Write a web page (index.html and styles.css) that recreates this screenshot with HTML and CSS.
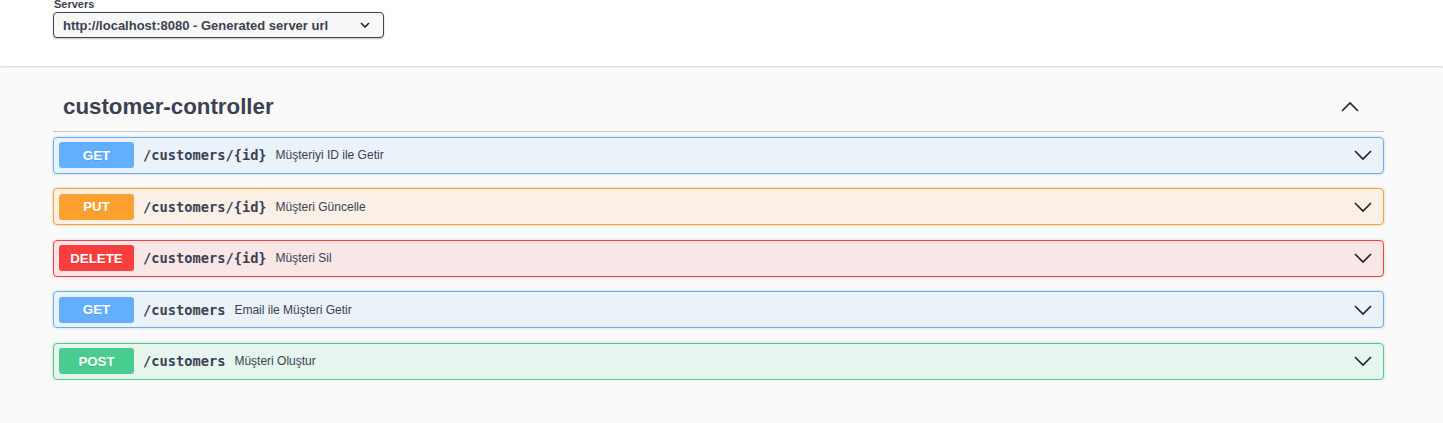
FILE: index.html
```html
<!DOCTYPE html>
<html lang="tr">
<head>
<meta charset="utf-8">
<title>Swagger UI</title>
<link rel="stylesheet" href="styles.css">
</head>
<body>
<div class="scheme">
  <div class="servers">
    <span class="servers-label">Servers</span>
    <div class="server-select">
      <span>http://localhost:8080 - Generated server url</span>
      <svg class="sel-arrow" width="10" height="6" viewBox="0 0 10 6"><path d="M1 1 L5 5 L9 1" fill="none" stroke="#222" stroke-width="1.6"/></svg>
    </div>
  </div>
</div>
<div class="wrapper">
  <div class="tag-header">
    <h3 class="tag-title">customer-controller</h3>
    <svg class="chev" width="20" height="20" viewBox="0 0 20 20"><path d="M2 14 L10 6 L18 14" fill="none" stroke="#222" stroke-width="1.6"/></svg>
  </div>
  <div class="ops">
    <div class="op op-get">
      <span class="method">GET</span>
      <span class="path">/customers/{id}</span>
      <span class="desc">Müşteriyi ID ile Getir</span>
      <svg class="chev" width="20" height="20" viewBox="0 0 20 20"><path d="M2 6 L10 14 L18 6" fill="none" stroke="#222" stroke-width="1.6"/></svg>
    </div>
    <div class="op op-put">
      <span class="method">PUT</span>
      <span class="path">/customers/{id}</span>
      <span class="desc">Müşteri Güncelle</span>
      <svg class="chev" width="20" height="20" viewBox="0 0 20 20"><path d="M2 6 L10 14 L18 6" fill="none" stroke="#222" stroke-width="1.6"/></svg>
    </div>
    <div class="op op-delete">
      <span class="method">DELETE</span>
      <span class="path">/customers/{id}</span>
      <span class="desc">Müşteri Sil</span>
      <svg class="chev" width="20" height="20" viewBox="0 0 20 20"><path d="M2 6 L10 14 L18 6" fill="none" stroke="#222" stroke-width="1.6"/></svg>
    </div>
    <div class="op op-get">
      <span class="method">GET</span>
      <span class="path">/customers</span>
      <span class="desc">Email ile Müşteri Getir</span>
      <svg class="chev" width="20" height="20" viewBox="0 0 20 20"><path d="M2 6 L10 14 L18 6" fill="none" stroke="#222" stroke-width="1.6"/></svg>
    </div>
    <div class="op op-post">
      <span class="method">POST</span>
      <span class="path">/customers</span>
      <span class="desc">Müşteri Oluştur</span>
      <svg class="chev" width="20" height="20" viewBox="0 0 20 20"><path d="M2 6 L10 14 L18 6" fill="none" stroke="#222" stroke-width="1.6"/></svg>
    </div>
  </div>
</div>
</body>
</html>
```
FILE: styles.css
```css
* { box-sizing: border-box; }
html, body { margin: 0; padding: 0; }
body {
  background: #fafafa;
  font-family: "Liberation Sans", Arial, sans-serif;
  color: #3b4151;
  overflow: hidden;
}
.scheme {
  background: #fff;
  height: 66px;
  box-shadow: 0 1px 2px 0 rgba(0,0,0,.15);
  position: relative;
  z-index: 1;
  padding-left: 53px;
}
.servers {
  display: flex;
  flex-direction: column;
  align-items: flex-start;
}
.servers-label {
  font-size: 11px;
  font-weight: bold;
  line-height: 13px;
  margin-top: -2px;
  margin-left: 1px;
}
.server-select {
  margin-top: 1px;
  width: 331px;
  height: 26px;
  border: 1px solid #41444e;
  border-radius: 4px;
  background: #f7f7f7;
  box-shadow: 0 1px 2px 0 rgba(0,0,0,.25);
  display: flex;
  align-items: center;
  justify-content: space-between;
  padding: 0 13px 0 9px;
  font-size: 13px;
  font-weight: bold;
  color: #3b4151;
}
.sel-arrow { display: block; }
.wrapper {
  padding: 0 59px 0 53px;
}
.tag-header {
  display: flex;
  align-items: center;
  justify-content: space-between;
  padding: 27px 24px 10px 10px;
  border-bottom: 1px solid rgba(59,65,81,.3);
  margin-bottom: 5px;
}
.tag-title {
  margin: 0;
  font-size: 22.3px;
  font-weight: bold;
  line-height: 27.6px;
  color: #3b4151;
}
.chev { display: block; flex: none; }
.ops { display: flex; flex-direction: column; gap: 14.5px; }
.op {
  display: flex;
  align-items: center;
  height: 37px;
  padding: 0 10px 0 5px;
  border: 1px solid;
  border-radius: 4px;
  box-shadow: 0 0 3px rgba(0,0,0,.19);
}
.method {
  flex: none;
  width: 75px;
  height: 26px;
  border-radius: 3px;
  display: flex;
  align-items: center;
  justify-content: center;
  color: #fff;
  font-size: 13.3px;
  font-weight: bold;
  text-shadow: 0 1px 0 rgba(0,0,0,.1);
}
.path {
  font-family: "DejaVu Sans Mono", "Liberation Mono", monospace;
  font-weight: bold;
  font-size: 13.7px;
  color: #3b4151;
  padding: 0 9px;
}
.desc {
  flex: 1;
  font-size: 12px;
  color: #3b4151;
}
.op-get { background: rgba(97,175,254,.1); border-color: #61affe; }
.op-get .method { background: #61affe; }
.op-put { background: rgba(252,161,48,.1); border-color: #fca130; }
.op-put .method { background: #fca130; }
.op-delete { background: rgba(249,62,62,.1); border-color: #f93e3e; }
.op-delete .method { background: #f93e3e; }
.op-post { background: rgba(73,204,144,.1); border-color: #49cc90; }
.op-post .method { background: #49cc90; }
```
